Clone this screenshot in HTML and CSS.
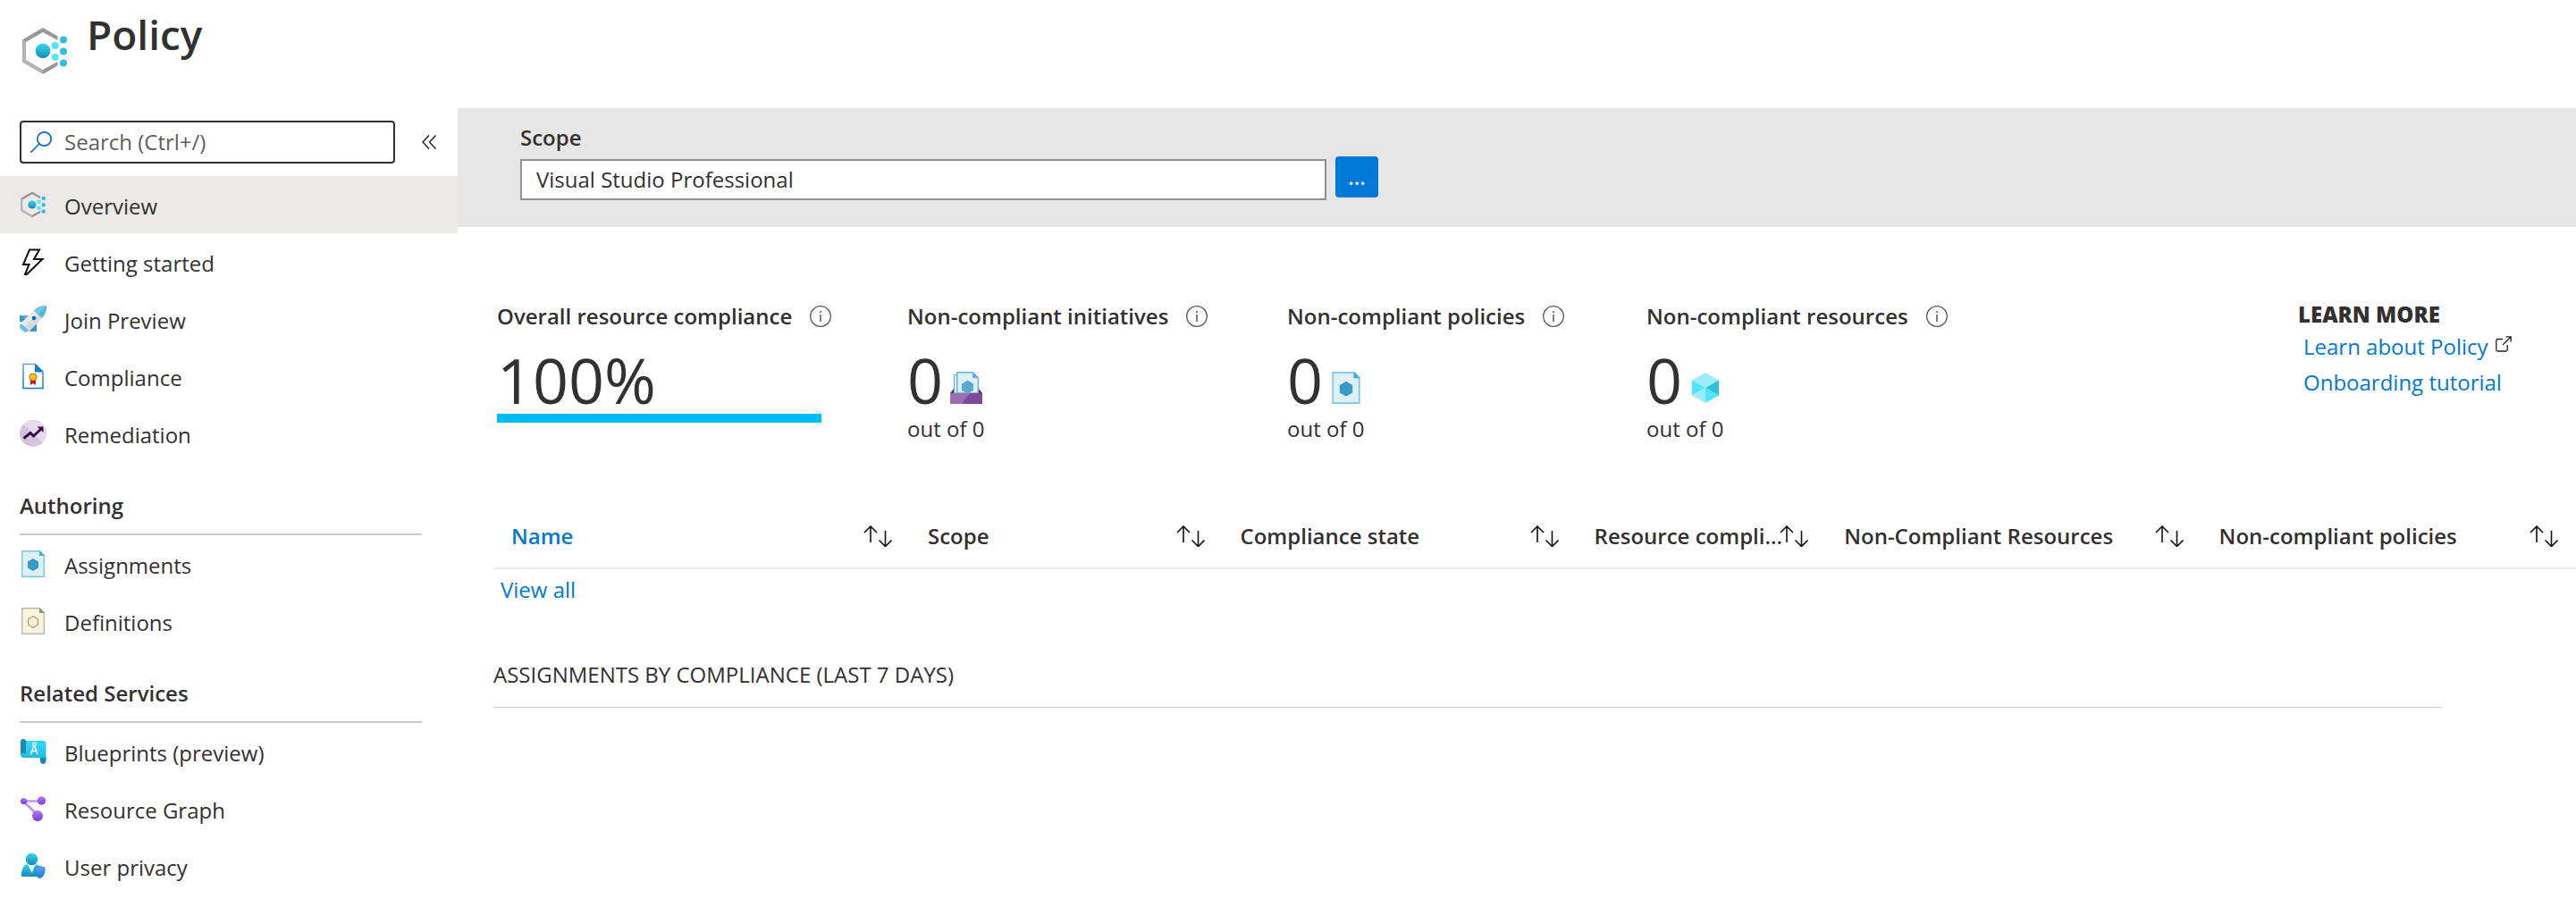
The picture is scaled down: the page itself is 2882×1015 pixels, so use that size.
FILE: index.html
```html
<!DOCTYPE html>
<html lang="en">
<head>
<meta charset="utf-8">
<meta name="viewport" content="width=device-width, initial-scale=1">
<title>Policy</title>
<link rel="stylesheet" href="styles.css">
</head>
<body>
<svg class="defs" aria-hidden="true">
  <defs>
    <linearGradient id="cyan" x1="0" y1="0" x2="0" y2="1"><stop offset="0" stop-color="#32d4f5"/><stop offset="1" stop-color="#198ab3"/></linearGradient>
    <linearGradient id="sheet" x1="0" y1="0" x2="0" y2="1"><stop offset="0.2" stop-color="#32d4f5"/><stop offset="1" stop-color="#22b4d9"/></linearGradient>
    <linearGradient id="violet" x1="0" y1="0" x2="0" y2="1"><stop offset="0" stop-color="#b27be8"/><stop offset="1" stop-color="#773adc"/></linearGradient>
    <linearGradient id="shield" x1="0" y1="0" x2="0" y2="1"><stop offset="0" stop-color="#4fa8ee"/><stop offset="1" stop-color="#1b80d8"/></linearGradient>
    <linearGradient id="page" x1="0" y1="0" x2="0" y2="1"><stop offset="0" stop-color="#5ea0ef"/><stop offset="1" stop-color="#0078d4"/></linearGradient>
    <symbol id="i-policy" viewBox="0 0 54 54">
      <path d="M2 14.500V39.500L25 53V48L6 37V17Z" fill="#b3b3b3"/>
      <path d="M2 14.500L25 1L41.500 10.500V15L25 6L6 17Z" fill="#979797"/>
      <path d="M25 53L41.500 43.500V39L25 48Z" fill="#979797"/>
      <circle cx="25" cy="27" r="8.300" fill="url(#cyan)"/>
      <g fill="#50e6ff"><circle cx="38.700" cy="21" r="4"/><circle cx="38.700" cy="34" r="4"/></g>
      <g fill="#32bedd"><circle cx="48" cy="14.500" r="4"/><circle cx="48" cy="27.500" r="4"/><circle cx="48" cy="40.500" r="4"/></g>
    </symbol>
    <symbol id="i-bolt" viewBox="0 0 30 30">
      <path d="M11 1.500H22L16 12H25.500L8 29H6L10.500 18H4Z" fill="none" stroke="#111" stroke-width="2"/>
    </symbol>
    <symbol id="i-rocket" viewBox="0 0 30 30">
      <path d="M0 11H10L6 15.500L0 18Z" fill="#59a9d2"/><path d="M0 11L9 16L4 18L0 18Z" fill="#3e96c4"/>
      <path d="M19 18V29H11L14 24Z" fill="#3999c6"/>
      <path d="M2 20L11 28L6 30L0 25V22Z" fill="#6fbee0"/>
      <path d="M16 5L25 14L11 28L2 19Z" fill="#e9e9e9"/><path d="M6 23L20.500 9.500L25 14L11 28Z" fill="#d9dadb"/>
      <path d="M30 0C23 0 19 2 16 5.500L25 14C28 10.500 30 7 30 0Z" fill="#59b4d9"/><path d="M30 0C23 0 19 2 16 5.500L20.500 9.500Z" fill="#7cc5e2"/>
      <circle cx="16" cy="14" r="2.300" fill="#0072c6"/>
    </symbol>
    <symbol id="i-compliance" viewBox="0 0 30 30">
      <path d="M4 1.500H17.500L26 10V28.500H4Z" fill="#fff" stroke="url(#page)" stroke-width="1.500"/>
      <path d="M17 1L27 10.500H17Z" fill="#0f7bdb"/>
      <path d="M12 17H18V25L15 23L12 25Z" fill="#b5202c"/>
      <circle cx="15" cy="16" r="4" fill="#ffca00" stroke="#e2522c" stroke-width="1"/>
    </symbol>
    <symbol id="i-remediation" viewBox="0 0 30 30">
      <circle cx="15" cy="15" r="15" fill="#d5c3dd"/><path d="M4.400 4.400A15 15 0 0 1 25.600 25.600Z" fill="#e7dcec"/>
      <path d="M4.500 20.500L12 14.500L15.500 18L23.500 10.500" fill="none" stroke="#32113f" stroke-width="3"/><path d="M19.500 7.500H26.500V14Z" fill="#32113f"/>
    </symbol>
    <symbol id="i-assign" viewBox="0 0 30 30">
      <path d="M2.700 0.700H22.500L27.300 5.500V29.300H2.700Z" fill="#def0f7" stroke="#7dc5e3" stroke-width="1.400"/>
      <path d="M22 0L28 6H22Z" fill="#3faedb"/><path d="M15 9L21 12.500V19.500L15 23L9 19.500V12.500Z" fill="#3999c6"/>
    </symbol>
    <symbol id="i-define" viewBox="0 0 30 30">
      <path d="M2.700 0.700H22.500L27.300 5.500V29.300H2.700Z" fill="#fff4d9" stroke="#b9bab8" stroke-width="1.400"/>
      <path d="M22 0L28 6H22Z" fill="#8f9090"/><path d="M15 9.700L20.400 12.800V19.200L15 22.300L9.600 19.200V12.800Z" fill="#fff4d9" stroke="#9b9b95" stroke-width="1.200"/>
    </symbol>
    <symbol id="i-blueprint" viewBox="0 0 30 30">
      <path d="M4 3H27Q29.500 3 29.500 6V24Q29 22 26 22H4Q1 22 1 18Z" fill="url(#sheet)"/>
      <path d="M1 18V4Q1 1 4 1Q7 1 7 4V17Q3 15.500 1 18Z" fill="#198ab3"/>
      <path d="M23 22H29.500V25.500Q29 29 26 29Q23 28 23 25.500Z" fill="#198ab3"/>
      <g fill="none" stroke="#fff" stroke-width="1.300"><circle cx="16.300" cy="7" r="1.800"/><path d="M15.800 9L12.500 18.500M16.800 9L20 18.500M12.500 14.500H20"/></g>
    </symbol>
    <symbol id="i-graph" viewBox="0 0 30 30">
      <path d="M4 6.500H25M4 6.500L20 22" stroke="#b796f9" stroke-width="2.600"/>
      <g fill="url(#violet)"><circle cx="4.500" cy="6.500" r="3.600"/><circle cx="24.500" cy="6" r="4.700"/><circle cx="20" cy="23" r="6"/></g>
    </symbol>
    <symbol id="i-user" viewBox="0 0 30 30">
      <path d="M1.500 25Q3 13 9 13H18Q24 13 25 25Q25 27 23 27H3.500Q1.500 27 1.500 25Z" fill="url(#cyan)"/>
      <path d="M9 13H18L13.500 23Z" fill="#e6fafd"/><circle cx="13.500" cy="7.500" r="6.700" fill="url(#cyan)"/>
      <path d="M17 16.500Q20 16.500 22.500 15Q25 16.500 28 16.500V21Q28 26 22.500 29Q17 26 17 21Z" fill="url(#shield)" stroke="#2170c8" stroke-width=".6"/>
    </symbol>
    <symbol id="i-info" viewBox="0 0 24 24">
      <circle cx="12" cy="12" r="11.300" fill="none" stroke="#555" stroke-width="1.300"/><path d="M12 10V18M12 6V8" stroke="#555" stroke-width="1.500"/>
    </symbol>
    <symbol id="i-initiative" viewBox="0 0 36 36">
      <path d="M0 24L4 19H32L36 24Z" fill="#68217a"/>
      <path d="M4.500 3.500H9V24H4.500Z" fill="#def0f7" stroke="#59b4d9"/>
      <path d="M7.800 0.700H25L31.300 7V24H7.800Z" fill="#def0f7" stroke="#59b4d9" stroke-width="1.400"/><path d="M25 0L32 7H25Z" fill="#59b4d9"/>
      <path d="M19.500 9.500L26 13.500V21L19.500 24.500L13 21V13.500Z" fill="#5ca9cf"/>
      <path d="M0 24H36V36H0Z" fill="#804998"/><path d="M0 24H22L13 36H0Z" fill="#9c6fb0"/>
    </symbol>
    <symbol id="i-cube" viewBox="0 0 36 36">
      <path d="M18 1L33 9.500L18 18L3 9.500Z" fill="#9cebff"/><path d="M3 9.500L18 18L3 26.500Z" fill="#50e6ff"/>
      <path d="M33 9.500V26.500L18 18Z" fill="#32bedd"/><path d="M3 26.500L18 18V35Z" fill="#9cebff"/><path d="M33 26.500L18 18V35Z" fill="#50e6ff"/>
    </symbol>
    <symbol id="i-sort" viewBox="0 0 32 24">
      <path d="M8 19V1M1 8L8 1L15 8M24.500 6V23.500M17.500 16.500L24.500 23.500L31.500 16.500" fill="none" stroke="#111" stroke-width="1.600"/>
    </symbol>
  </defs>
</svg>

<header class="header">
  <svg class="header-icon"><use href="#i-policy"/></svg>
  <h1 class="title">Policy</h1>
</header>

<div class="layout">
  <aside class="sidebar">
    <div class="search-row">
      <label class="search">
        <svg class="search-icon" viewBox="0 0 24 24"><g fill="none" stroke="#0f6cc9" stroke-width="1.700"><circle cx="15.500" cy="8.500" r="7.700"/><path d="M10 14L.5 23.500"/></g></svg>
        <input class="search-input" type="search" placeholder="Search (Ctrl+/)" aria-label="Search">
      </label>
      <button class="collapse" type="button" aria-label="Collapse menu"><svg class="collapse-icon" viewBox="0 0 16 16"><path d="M8 .5L1 8L8 15.500M15.500 .5L8.500 8L15.500 15.500" fill="none" stroke="#111" stroke-width="1.300"/></svg></button>
    </div>
    <nav>
      <a class="item active" href="#"><svg class="icon"><use href="#i-policy"/></svg><span>Overview</span></a>
      <a class="item" href="#"><svg class="icon"><use href="#i-bolt"/></svg><span>Getting started</span></a>
      <a class="item" href="#"><svg class="icon"><use href="#i-rocket"/></svg><span>Join Preview</span></a>
      <a class="item" href="#"><svg class="icon"><use href="#i-compliance"/></svg><span>Compliance</span></a>
      <a class="item" href="#"><svg class="icon"><use href="#i-remediation"/></svg><span>Remediation</span></a>
      <h2 class="group">Authoring</h2>
      <a class="item" href="#"><svg class="icon"><use href="#i-assign"/></svg><span>Assignments</span></a>
      <a class="item" href="#"><svg class="icon"><use href="#i-define"/></svg><span>Definitions</span></a>
      <h2 class="group">Related Services</h2>
      <a class="item" href="#"><svg class="icon"><use href="#i-blueprint"/></svg><span>Blueprints (preview)</span></a>
      <a class="item" href="#"><svg class="icon"><use href="#i-graph"/></svg><span>Resource Graph</span></a>
      <a class="item" href="#"><svg class="icon"><use href="#i-user"/></svg><span>User privacy</span></a>
    </nav>
  </aside>

  <main class="main">
    <section class="scope">
      <label class="scope-label" for="scope">Scope</label>
      <div class="scope-row">
        <input class="scope-input" id="scope" type="text" value="Visual Studio Professional" readonly>
        <button class="scope-button" type="button" aria-label="Choose scope">...</button>
      </div>
    </section>

    <section class="summary">
      <div class="metric">
        <h3 class="metric-label">Overall resource compliance <svg class="info"><use href="#i-info"/></svg></h3>
        <div class="value">100%</div>
        <div class="bar"></div>
      </div>
      <div class="metric">
        <h3 class="metric-label">Non-compliant initiatives <svg class="info"><use href="#i-info"/></svg></h3>
        <div class="value">0<svg class="value-icon"><use href="#i-initiative"/></svg></div>
        <div class="total">out of 0</div>
      </div>
      <div class="metric">
        <h3 class="metric-label">Non-compliant policies <svg class="info"><use href="#i-info"/></svg></h3>
        <div class="value">0<svg class="value-icon"><use href="#i-assign"/></svg></div>
        <div class="total">out of 0</div>
      </div>
      <div class="metric">
        <h3 class="metric-label">Non-compliant resources <svg class="info"><use href="#i-info"/></svg></h3>
        <div class="value">0<svg class="value-icon"><use href="#i-cube"/></svg></div>
        <div class="total">out of 0</div>
      </div>
      <div class="learn">
        <h3 class="learn-title">LEARN MORE</h3>
        <a class="learn-link" href="#">Learn about Policy<svg class="external" viewBox="0 0 18 18"><path d="M8 3.500H2.500Q.8 3.500 .8 5V15.500Q.8 17 2.500 17H11.500Q13.200 17 13.200 15.500V10M8 10L17 1M11.500 .8H17.200V6.500" fill="none" stroke="#222" stroke-width="1.300"/></svg></a>
        <a class="learn-link" href="#">Onboarding tutorial</a>
      </div>
    </section>

    <table class="grid">
      <colgroup><col class="c-name"><col class="c-scope"><col class="c-state"><col class="c-compliance"><col class="c-wide"><col class="c-wide"></colgroup>
      <thead>
        <tr>
          <th><button class="sort sorted" type="button"><span class="sort-text">Name</span><svg class="sort-icon"><use href="#i-sort"/></svg></button></th>
          <th><button class="sort" type="button"><span class="sort-text">Scope</span><svg class="sort-icon"><use href="#i-sort"/></svg></button></th>
          <th><button class="sort" type="button"><span class="sort-text">Compliance state</span><svg class="sort-icon"><use href="#i-sort"/></svg></button></th>
          <th><button class="sort" type="button"><span class="sort-text">Resource compliance</span><svg class="sort-icon"><use href="#i-sort"/></svg></button></th>
          <th><button class="sort" type="button"><span class="sort-text">Non-Compliant Resources</span><svg class="sort-icon"><use href="#i-sort"/></svg></button></th>
          <th><button class="sort" type="button"><span class="sort-text">Non-compliant policies</span><svg class="sort-icon"><use href="#i-sort"/></svg></button></th>
        </tr>
      </thead>
    </table>
    <a class="view-all" href="#">View all</a>

    <h2 class="section-title">ASSIGNMENTS BY COMPLIANCE (LAST 7 DAYS)</h2>
  </main>
</div>
</body>
</html>
```
FILE: styles.css
```css
* {
  box-sizing: border-box;
}

body {
  margin: 0;
  background: #fff;
  color: #323130;
  font-family: "Open Sans", "Noto Sans", sans-serif;
  font-size: 24px;
  line-height: 32px;
}

h1,
h2,
h3 {
  margin: 0;
  font-size: 24px;
  font-weight: 600;
}

button,
input {
  font: inherit;
  color: inherit;
}

button {
  border: 0;
  padding: 0;
  background: none;
}

a {
  color: #0078d4;
  text-decoration: none;
}

svg {
  flex: none;
}

.defs {
  position: absolute;
  width: 0;
  height: 0;
}

.header {
  display: flex;
  align-items: flex-start;
  gap: 20px;
  min-height: 121px;
  padding: 8px 23px 0;
}

.header-icon {
  width: 54px;
  height: 54px;
  margin-top: 22px;
}

.title {
  font-size: 46px;
  line-height: 60px;
}

.layout {
  display: flex;
}

.sidebar {
  flex: none;
  width: 512px;
}

.search-row {
  display: flex;
  align-items: center;
  gap: 30px;
  padding: 14px 22px;
}

.search {
  display: flex;
  align-items: center;
  gap: 14px;
  width: 420px;
  height: 48px;
  padding: 0 10px;
  border: 2px solid #323130;
  border-radius: 4px;
}

.search-icon {
  width: 24px;
  height: 24px;
}

.search-input {
  flex: 1;
  min-width: 0;
  padding: 0;
  border: 0;
  outline: 0;
  background: none;
  appearance: none;
}

.search-input::placeholder {
  color: #605e5c;
  opacity: 1;
}

.collapse-icon {
  display: block;
  width: 16px;
  height: 16px;
}

.item {
  display: flex;
  align-items: center;
  gap: 20px;
  height: 64px;
  padding: 0 22px;
  color: #323130;
}

.item span {
  padding-top: 3px;
}

.active {
  background: #ebeae8;
}

.icon {
  width: 30px;
  height: 30px;
}

.group {
  height: 82px;
  margin: 0 40px 0 22px;
  padding-top: 33px;
  border-bottom: 2px solid #c8c8c8;
}

.main {
  flex: 1;
  min-width: 0;
}

.scope {
  height: 133px;
  padding: 17px 70px 0;
  background: #e6e6e6;
}

.scope-label {
  display: block;
  font-weight: 600;
}

.scope-row {
  display: flex;
  align-items: flex-start;
  gap: 10px;
  padding-top: 5px;
}

.scope-input {
  width: 902px;
  height: 46px;
  margin-top: 3px;
  padding: 0 16px 2px;
  border: 2px solid #919191;
  background: #fff;
}

.scope-button {
  width: 48px;
  height: 46px;
  border-radius: 4px;
  background: #0078d7;
  color: #fff;
  font-weight: 600;
}

.summary {
  display: grid;
  grid-template-columns: 459px 425px 402px auto 267px;
  padding: 82px 44px 0;
}

.metric-label {
  display: flex;
  align-items: center;
  gap: 20px;
  line-height: 36px;
  white-space: nowrap;
}

.info {
  width: 24px;
  height: 24px;
}

.value {
  display: flex;
  align-items: flex-end;
  gap: 8px;
  height: 91px;
  font-size: 70px;
  line-height: 76px;
}

.value-icon {
  width: 36px;
  height: 36px;
  margin-bottom: 11px;
}

.bar {
  width: 363px;
  height: 10px;
  background: #00bcf2;
}

.total {
  line-height: 34px;
}

.learn-title {
  font-weight: 800;
  line-height: 32px;
}

.learn-link {
  display: flex;
  align-items: flex-start;
  gap: 8px;
  padding-left: 6px;
  line-height: 40px;
  white-space: nowrap;
}

.external {
  width: 18px;
  height: 18px;
  margin-top: 8px;
}

.grid {
  width: calc(100% - 40px);
  margin: 67px 0 0 40px;
  border-collapse: collapse;
  table-layout: fixed;
}

.c-name {
  width: 20%;
}

.c-scope {
  width: 15%;
}

.c-state {
  width: 17%;
}

.c-compliance {
  width: 12%;
}

.c-wide {
  width: 18%;
}

.grid th {
  height: 72px;
  padding: 0 20px;
  border-bottom: 2px solid #ebebeb;
}

.sort {
  display: flex;
  align-items: center;
  width: 100%;
  font-weight: 600;
  text-align: left;
}

.sorted {
  color: #0078d4;
}

.sort-text {
  flex: 1;
  margin-right: -8px;
  overflow: hidden;
  text-overflow: ellipsis;
  white-space: nowrap;
}

.sort-icon {
  width: 32px;
  height: 24px;
}

.view-all {
  display: inline-block;
  margin: 7px 0 0 48px;
}

.section-title {
  margin: 63px 150px 0 40px;
  padding-bottom: 20px;
  border-bottom: 1px solid #c8c8c8;
  font-weight: 400;
}
```
